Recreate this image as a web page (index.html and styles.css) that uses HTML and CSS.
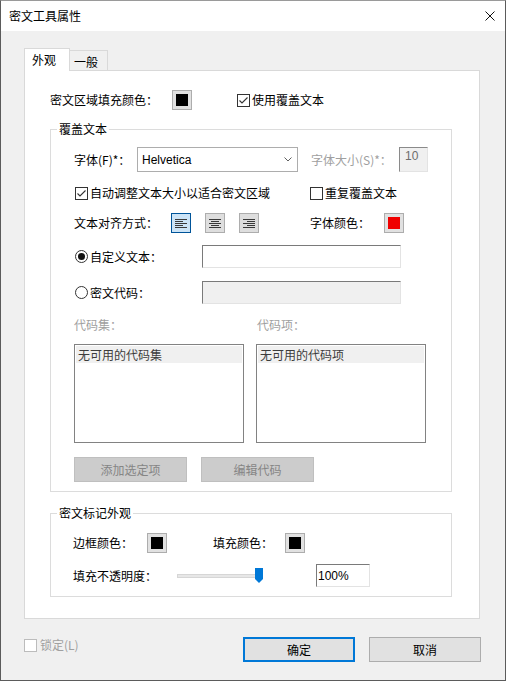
FILE: index.html
```html
<!DOCTYPE html>
<html lang="zh-CN">
<head>
    <meta charset="UTF-8">
    <meta name="viewport" content="width=device-width, initial-scale=1.0">
    <link rel="stylesheet" href="styles.css">
    <title>密文工具属性</title>
</head>
<body>
    <div class="window">
        <div class="titlebar">
            <span class="title">密文工具属性</span>
            <svg class="close" viewBox="0 0 10 10"><path d="M0.5 0.5L9.5 9.5M9.5 0.5L0.5 9.5"/></svg>
        </div>

        <div class="content">
            <div class="tabs">
                <div class="tab active">外观</div>
                <div class="tab inactive">一般</div>
            </div>

            <div class="panel">
                <div class="row fill-row">
                    <span class="label w122">密文区域填充颜色：</span>
                    <span class="swatch"><i class="black"></i></span>
                    <span class="check use-overlay">
                        <span class="cb"><svg viewBox="0 0 11 11"><path d="M1.5 5.5L4 8L9.5 2.5"/></svg></span>
                        使用覆盖文本
                    </span>
                </div>

                <fieldset class="group overlay">
                    <legend>覆盖文本</legend>
                    <div class="group-body">
                        <div class="row r-font">
                            <span class="label w63">字体(F)*：</span>
                            <div class="select">
                                <span>Helvetica</span>
                                <svg class="chevron" viewBox="0 0 8 5"><path d="M0.5 0.5L4 4L7.5 0.5"/></svg>
                            </div>
                            <span class="label dis size-label">字体大小(S)*：</span>
                            <div class="num">10</div>
                        </div>

                        <div class="row r-auto">
                            <span class="check w236">
                                <span class="cb"><svg viewBox="0 0 11 11"><path d="M1.5 5.5L4 8L9.5 2.5"/></svg></span>
                                自动调整文本大小以适合密文区域
                            </span>
                            <span class="check">
                                <span class="cb"></span>
                                重复覆盖文本
                            </span>
                        </div>

                        <div class="row r-align">
                            <span class="label w97">文本对齐方式：</span>
                            <div class="align-group">
                                <span class="align-btn sel"><svg viewBox="0 0 12 10"><path d="M0 1.5h12M0 3.5h8M0 5.5h12M0 7.5h8M0 9.5h12"/></svg></span>
                                <span class="align-btn"><svg viewBox="0 0 12 10"><path d="M0 1.5h12M2 3.5h8M0 5.5h12M2 7.5h8M0 9.5h12"/></svg></span>
                                <span class="align-btn"><svg viewBox="0 0 12 10"><path d="M0 1.5h12M4 3.5h8M0 5.5h12M4 7.5h8M0 9.5h12"/></svg></span>
                            </div>
                            <span class="label color-label">字体颜色：</span>
                            <span class="swatch"><i class="red"></i></span>
                        </div>

                        <div class="row r-custom">
                            <span class="check w128">
                                <span class="rb on"></span>
                                自定义文本：
                            </span>
                            <div class="field"></div>
                        </div>

                        <div class="row r-code">
                            <span class="check w128">
                                <span class="rb"></span>
                                密文代码：
                            </span>
                            <div class="field off"></div>
                        </div>

                        <div class="row r-labels">
                            <span class="label dis w183">代码集：</span>
                            <span class="label dis">代码项：</span>
                        </div>

                        <div class="row r-lists">
                            <div class="list"><div class="list-item">无可用的代码集</div></div>
                            <div class="list"><div class="list-item">无可用的代码项</div></div>
                        </div>

                        <div class="row r-buttons">
                            <span class="btn-dis">添加选定项</span>
                            <span class="btn-dis">编辑代码</span>
                        </div>
                    </div>
                </fieldset>

                <fieldset class="group marker">
                    <legend>密文标记外观</legend>
                    <div class="group-body marker-body">
                        <div class="row r-colors">
                            <span class="label w74">边框颜色：</span>
                            <span class="swatch"><i class="black"></i></span>
                            <span class="label fill-label">填充颜色：</span>
                            <span class="swatch"><i class="black"></i></span>
                        </div>
                        <div class="row r-opacity">
                            <span class="label w104">填充不透明度：</span>
                            <div class="slider">
                                <div class="track"></div>
                                <svg class="thumb" viewBox="0 0 8 15"><path d="M0 0h8v11l-4 4l-4-4z"/></svg>
                            </div>
                            <div class="pct">100%</div>
                        </div>
                    </div>
                </fieldset>
            </div>

            <div class="footer">
                <span class="lock">
                    <span class="cb dis-box"></span>
                    锁定(L)
                </span>
                <button class="btn primary">确定</button>
                <button class="btn">取消</button>
            </div>
        </div>
    </div>
</body>
</html>
```

FILE: styles.css
```css
* {
    box-sizing: border-box;
}
html, body {
    margin: 0;
    padding: 0;
}
body {
    width: 506px;
    height: 681px;
    font-family: "Noto Sans CJK SC", sans-serif;
    font-size: 12px;
    line-height: 16px;
    color: #000;
    background-color: #f0f0f0;
}

/* window frame */
.window {
    height: 681px;
    display: flex;
    flex-direction: column;
    border: 1px solid #5b5b5b;
    border-top-color: #9a9a9a;
    background-color: #f0f0f0;
}
.titlebar {
    flex: none;
    height: 30px;
    display: flex;
    align-items: center;
    justify-content: space-between;
    padding: 0 10px 0 8px;
    background-color: #fff;
}
.close {
    width: 10px;
    height: 10px;
}
.close path {
    stroke: #111;
    stroke-width: 1;
    fill: none;
}
.content {
    flex: 1;
    padding: 17px 24px 0 23px;
}

/* tabs */
.tabs {
    display: flex;
    align-items: flex-end;
    height: 22px;
}
.tab {
    border: 1px solid #d9d9d9;
    border-bottom: 0;
}
.tab.active {
    width: 46px;
    height: 23px;
    margin-bottom: -1px;
    padding: 3px 0 0 7px;
    background-color: #fff;
    position: relative;
    z-index: 1;
}
.tab.inactive {
    width: 39px;
    height: 20px;
    margin-left: -1px;
    padding: 3px 0 0 4px;
    background-color: #f0f0f0;
}
.panel {
    width: 456px;
    height: 549px;
    padding: 19px 0 0 25px;
    background-color: #fff;
    border: 1px solid #d9d9d9;
}

/* generic rows */
.row {
    display: flex;
    align-items: center;
}
.label {
    flex: none;
    white-space: nowrap;
}
.dis {
    color: #a0a0a0;
}
.w63 { width: 63px; }
.w74 { width: 74px; }
.w97 { width: 97px; }
.w104 { width: 104px; }
.w122 { width: 122px; }
.w128 { width: 128px; }
.w183 { width: 183px; }
.w236 { width: 236px; }

.fill-row {
    height: 20px;
}
.use-overlay {
    margin-left: 45px;
}

/* colour swatch button */
.swatch {
    flex: none;
    width: 20px;
    height: 20px;
    padding: 3px;
    border: 1px solid #adadad;
    background-color: #e1e1e1;
}
.swatch i {
    display: block;
    width: 100%;
    height: 100%;
}
.black { background-color: #000; }
.red { background-color: #f00000; }

/* checkbox / radio */
.check {
    display: flex;
    align-items: center;
    flex: none;
    white-space: nowrap;
}
.cb {
    flex: none;
    width: 13px;
    height: 13px;
    margin-right: 2px;
    border: 1px solid #333;
    background-color: #fff;
    display: flex;
}
.cb svg {
    width: 11px;
    height: 11px;
}
.cb path {
    stroke: #333;
    stroke-width: 1.1;
    fill: none;
}
.rb {
    flex: none;
    width: 13px;
    height: 13px;
    margin-right: 2px;
    border: 1px solid #333;
    border-radius: 50%;
    background-color: #fff;
    display: flex;
    align-items: center;
    justify-content: center;
}
.rb.on::after {
    content: "";
    width: 7px;
    height: 7px;
    border-radius: 50%;
    background-color: #111;
}

/* group boxes */
.group {
    width: 402px;
    margin: 0;
    padding: 0;
    border: 1px solid #dcdcdc;
    min-inline-size: 0;
}
.group legend {
    margin-left: 6px;
    padding: 0 2px;
    line-height: 16px;
}
.overlay {
    margin-top: 11px;
}
.marker {
    margin-top: 13px;
}
.group-body {
    padding: 10px 0 9px 23px;
}
.marker-body {
    padding: 12px 0 9px 22px;
}

.r-font { height: 25px; }
.r-auto { height: 20px; margin-top: 11px; }
.r-auto .check:first-child { padding-left: 1px; }
.r-align { height: 20px; margin-top: 10px; }
.r-custom { height: 23px; margin-top: 12px; }
.r-code { height: 23px; margin-top: 13px; }
.r-custom .check, .r-code .check { padding-left: 1px; }
.r-labels { height: 16px; margin-top: 13px; }
.r-lists { height: 99px; margin-top: 11px; gap: 12px; }
.r-buttons { height: 25px; margin-top: 14px; gap: 14px; }
.r-colors { height: 20px; }
.r-opacity { height: 23px; margin-top: 11px; }

/* font dropdown */
.select {
    flex: none;
    width: 161px;
    height: 25px;
    display: flex;
    align-items: center;
    padding-left: 4px;
    border: 1px solid #adadad;
    background-color: #fff;
    font-family: "Liberation Sans", Arial, sans-serif;
}
.chevron {
    width: 8px;
    height: 5px;
    margin-left: auto;
    margin-right: 5px;
}
.chevron path {
    stroke: #606060;
    stroke-width: 1;
    fill: none;
}
.size-label {
    width: 88px;
    margin-left: 13px;
}
.num {
    flex: none;
    width: 29px;
    height: 25px;
    padding-left: 5px;
    border: 1px solid;
    border-color: #8a8a8a #e3e3e3 #e3e3e3 #8a8a8a;
    background-color: #f0f0f0;
    color: #6d6d6d;
    font-family: "Liberation Sans", Arial, sans-serif;
}

/* alignment buttons */
.align-group {
    display: flex;
    gap: 14px;
}
.align-btn {
    width: 20px;
    height: 20px;
    display: flex;
    align-items: center;
    justify-content: center;
    border: 1px solid #adadad;
    background-color: #dedede;
}
.align-btn.sel {
    border-color: #005499;
    background-color: #cce4f7;
}
.align-btn svg {
    width: 12px;
    height: 10px;
}
.align-btn path {
    stroke: #3a3a3a;
    stroke-width: 1;
    fill: none;
}
.color-label {
    width: 74px;
    margin-left: 51px;
}

/* text fields */
.field {
    flex: none;
    width: 199px;
    height: 23px;
    border: 1px solid;
    border-color: #7a7a7a #e3e3e3 #e3e3e3 #7a7a7a;
    background-color: #fff;
}
.field.off {
    background-color: #f0f0f0;
}

/* code lists */
.list {
    width: 170px;
    height: 99px;
    padding: 1px;
    border: 1px solid #828282;
    background-color: #fff;
}
.list-item {
    height: 17px;
    padding-left: 2px;
    line-height: 17px;
    color: #3c3c3c;
    background-color: #f0f0f0;
}
.btn-dis {
    width: 113px;
    height: 25px;
    display: flex;
    align-items: center;
    justify-content: center;
    border: 1px solid #bfbfbf;
    background-color: #cccccc;
    color: #858585;
}

/* marker appearance */
.fill-label {
    width: 72px;
    margin-left: 46px;
}
.slider {
    flex: none;
    width: 86px;
    height: 16px;
    display: flex;
    align-items: center;
    position: relative;
}
.track {
    width: 100%;
    height: 4px;
    border: 1px solid #d6d6d6;
    background-color: #e7e7e7;
}
.thumb {
    position: absolute;
    right: 0;
    top: 0;
    width: 8px;
    height: 15px;
}
.thumb path {
    fill: #0078d7;
}
.pct {
    flex: none;
    width: 54px;
    height: 23px;
    margin-left: 53px;
    padding-left: 1px;
    display: flex;
    align-items: center;
    border: 1px solid;
    border-color: #7a7a7a #e3e3e3 #e3e3e3 #7a7a7a;
    background-color: #fff;
    font-family: "Liberation Sans", Arial, sans-serif;
}

/* footer */
.footer {
    display: flex;
    align-items: flex-start;
    margin-top: 18px;
}
.lock {
    display: flex;
    align-items: center;
    color: #a0a0a0;
}
.lock .dis-box {
    margin-right: 3px;
    border-color: #bcbcbc;
}
.btn {
    width: 112px;
    height: 25px;
    padding: 0;
    border: 1px solid #adadad;
    background-color: #e1e1e1;
    font-family: inherit;
    font-size: 12px;
    color: #000;
}
.btn.primary {
    margin-left: auto;
    margin-right: 14px;
    border: 2px solid #0078d7;
}
```
